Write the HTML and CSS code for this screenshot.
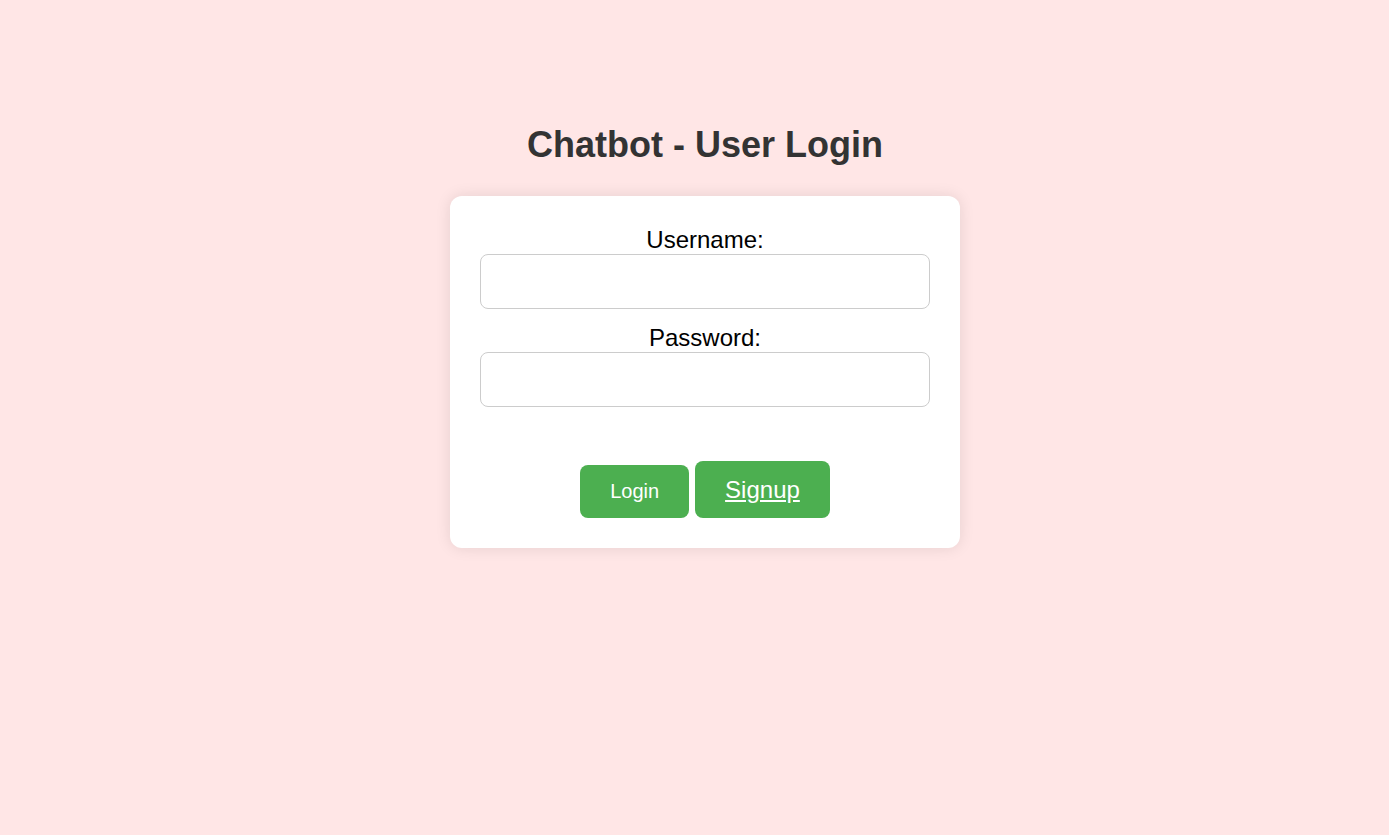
FILE: index.html
```html
<!DOCTYPE html>
<html lang="en">
<head>
<meta charset="utf-8">
<title>Chatbot - User Login</title>
<link rel="stylesheet" href="styles.css">
</head>
<body>
<main class="page">
  <h1 class="title">Chatbot - User Login</h1>
  <form class="card">
    <div class="field">
      <label class="label" for="username">Username:</label>
      <input class="input" type="text" id="username" name="username">
    </div>
    <div class="field">
      <label class="label" for="password">Password:</label>
      <input class="input" type="password" id="password" name="password">
    </div>
    <div class="actions">
      <button class="button login" type="submit">Login</button>
      <a class="button signup" href="#signup">Signup</a>
    </div>
  </form>
</main>
</body>
</html>
```

FILE: styles.css
```css
* {
  box-sizing: border-box;
}

body {
  margin: 0;
  min-height: 100vh;
  background: #ffe6e6;
  color: #000;
  font-family: Arial, "Liberation Sans", sans-serif;
  font-size: 24px;
  line-height: 28px;
}

.page {
  display: flex;
  flex-direction: column;
  align-items: center;
  padding: 124px 0 24px 21px;
}

.title {
  margin: 0 0 30px;
  color: #333;
  font-size: 36px;
  line-height: 42px;
  text-align: center;
}

.card {
  width: 100%;
  max-width: 510px;
  padding: 30px;
  border-radius: 12px;
  background: #fff;
  box-shadow: 0 0 15px rgba(0, 0, 0, 0.1);
  text-align: center;
}

.field {
  margin-bottom: 15px;
}

.label {
  display: block;
}

.input {
  display: block;
  width: 100%;
  height: 55px;
  padding: 15px;
  border: 1px solid #ccc;
  border-radius: 8px;
  background: #fff;
  font: inherit;
}

.actions {
  display: flex;
  justify-content: center;
  align-items: flex-end;
  gap: 6px;
  padding-top: 39px;
}

.button {
  border: 0;
  border-radius: 8px;
  background: #4caf50;
  color: #fff;
  font-family: inherit;
  cursor: pointer;
}

.login {
  padding: 15px 30px;
  font-size: 20px;
  line-height: 23px;
}

.signup {
  padding: 15px 30px;
  font-size: 24px;
  line-height: 27px;
  text-decoration: underline;
}
```
